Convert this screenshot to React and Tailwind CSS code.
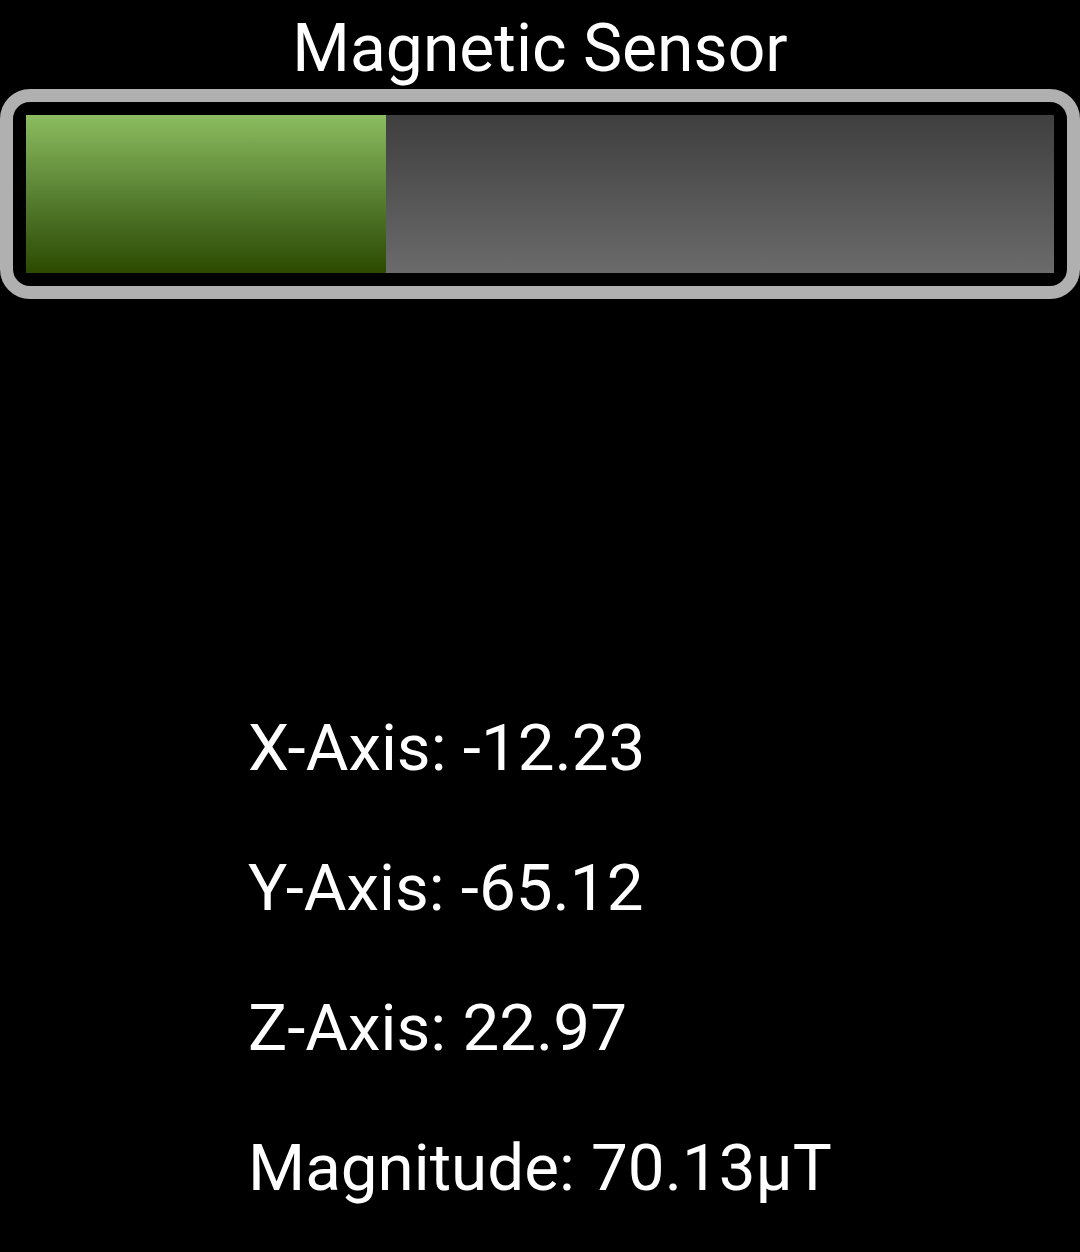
import React from 'react';

const readings = [
  { label: 'X-Axis', value: '-12.23' },
  { label: 'Y-Axis', value: '-65.12' },
  { label: 'Z-Axis', value: '22.97' },
  { label: 'Magnitude', value: '70.13µT' },
];

export default function App() {
  const level = 35;

  return (
    <div className="w-[1080px] h-[1252px] bg-black text-white overflow-hidden" style={{ fontFamily: 'Roboto, "Noto Sans", sans-serif' }}>
      {/* Title */}
      <div className="h-[89px] flex items-end justify-center">
        <h1 className="text-[66px] leading-[77px] font-normal mb-[2px]">Magnetic Sensor</h1>
      </div>

      {/* Level bar */}
      <div className="h-[210px] border-[13px] border-[#b0b0b0] rounded-[30px] p-[13px] flex">
        <div className="flex-1 flex bg-gradient-to-b from-[#3f3f3f] to-[#6b6b6b]">
          <div className="h-full bg-gradient-to-b from-[#8cbd60] to-[#2b4a00]" style={{ width: `${level}%` }} />
        </div>
      </div>

      {/* Readings */}
      <div className="mt-[379px] pl-[248px] flex flex-col">
        {readings.map((r) => (
          <div key={r.label} className="h-[140px] leading-[140px] text-[65.5px]">
            {r.label}: {r.value}
          </div>
        ))}
      </div>
    </div>
  );
}
